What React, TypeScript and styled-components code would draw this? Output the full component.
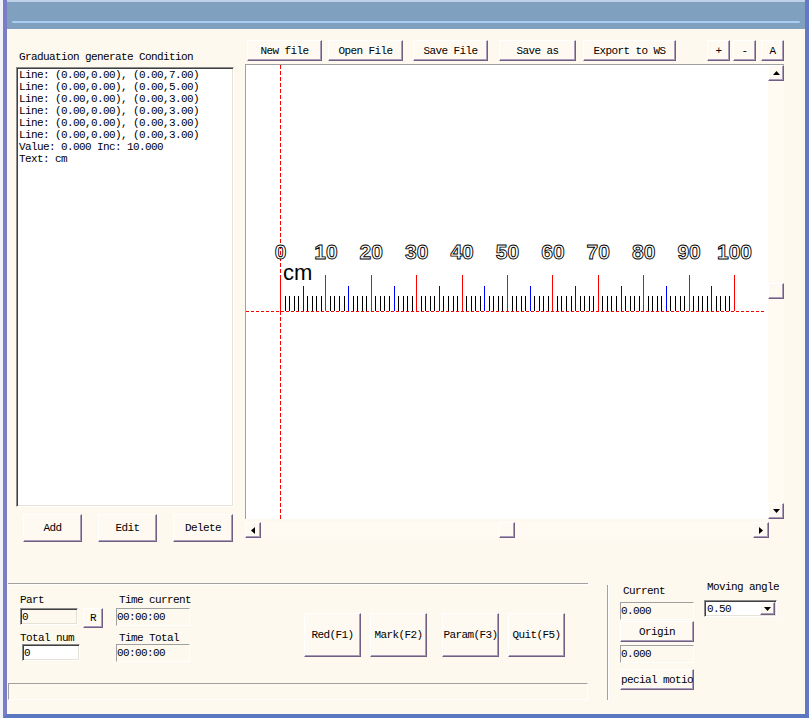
import styled, { createGlobalStyle, css } from "styled-components";

const GlobalStyle = createGlobalStyle`
  html, body { margin: 0; padding: 0; }
  body { background: #f2f3f9; }
  #root { width: 809px; height: 718px; overflow: hidden; }
`;

const sysFont = css`
  font-family: "Liberation Mono", "DejaVu Sans Mono", monospace;
  font-size: 11px;
  letter-spacing: -0.6px;
  line-height: 12px;
  color: #000;
`;

const raised = css`
  box-sizing: border-box;
  background: #fefaf1;
  border: 1px solid;
  border-color: #ffffff #6f5f82 #6f5f82 #ffffff;
  box-shadow: inset -1px -1px 0 #a99dba;
`;

const sunken = css`
  box-sizing: border-box;
  border: 1px solid;
  border-color: #8c8c8c #ffffff #ffffff #8c8c8c;
  box-shadow: inset 1px 1px 0 #404040, inset -1px -1px 0 #e6e2d8;
`;

const TOOLBAR = [
  { label: "New file", w: 75, ml: 2 },
  { label: "Open File", w: 75, ml: 6 },
  { label: "Save File", w: 75, ml: 10 },
  { label: "Save as", w: 77, ml: 11 },
  { label: "Export to WS", w: 93, ml: 7 },
  { label: "+", w: 23, ml: 31 },
  { label: "-", w: 23, ml: 3 },
  { label: "A", w: 23, ml: 5 },
];

const LINES = [
  "Line: (0.00,0.00), (0.00,7.00)",
  "Line: (0.00,0.00), (0.00,5.00)",
  "Line: (0.00,0.00), (0.00,3.00)",
  "Line: (0.00,0.00), (0.00,3.00)",
  "Line: (0.00,0.00), (0.00,3.00)",
  "Line: (0.00,0.00), (0.00,3.00)",
  "Value: 0.000 Inc: 10.000",
  "Text: cm",
];

const FKEYS = [
  { label: "Red(F1)", ml: 0 },
  { label: "Mark(F2)", ml: 9 },
  { label: "Param(F3)", ml: 15 },
  { label: "Quit(F5)", ml: 9 },
];

// ruler geometry, in canvas coordinates
const X0 = 34;
const UNIT = 4.54;
const BASE = 246;

const Frame = styled.div`
  margin-left: 3px;
  width: 798px;
  height: 714px;
  border-left: 4px solid #7b7dc6;
  border-right: 4px solid #6478c4;
  border-bottom: 4px solid #5b77bf;
  display: flex;
  flex-direction: column;
  background: #fef9ef;
`;

const TitleBar = styled.div`
  flex: none;
  box-sizing: border-box;
  height: 29px;
  padding: 19px 5px 0;
  background: #7fa1bf;
  border-top: 2px solid #bdd0e8;
`;

const TitleGlint = styled.div`
  height: 2px;
  border-radius: 1px;
  background: #a8cdef;
`;

const Client = styled.div`
  flex: 1;
  display: flex;
  flex-direction: column;
`;

const TopSection = styled.div`
  display: flex;
  align-items: flex-start;
  height: 513px;
  flex: none;
`;

const LeftPanel = styled.div`
  margin-left: 9px;
  width: 218px;
  display: flex;
  flex-direction: column;
`;

const Label = styled.div<{ $mt?: number; $pl?: number }>`
  ${sysFont};
  margin-top: ${({ $mt }) => $mt ?? 0}px;
  padding-left: ${({ $pl }) => $pl ?? 3}px;
  white-space: pre;
`;

const ListBox = styled.div`
  ${sysFont};
  ${sunken};
  margin-top: 4px;
  height: 440px;
  padding: 1px 0 0 2px;
  background: #ffffff;
  white-space: pre;
`;

const ButtonRow = styled.div`
  display: flex;
  gap: 16px;
  margin-top: 7px;
  padding-left: 7px;
`;

const Button = styled.div<{ $w: number; $h: number; $ml?: number; $mt?: number }>`
  ${raised};
  ${sysFont};
  width: ${({ $w }) => $w}px;
  height: ${({ $h }) => $h}px;
  margin-left: ${({ $ml }) => $ml ?? 0}px;
  margin-top: ${({ $mt }) => $mt ?? 0}px;
  flex: none;
  display: flex;
  align-items: center;
  justify-content: center;
  overflow: hidden;
  white-space: nowrap;
`;

const RightPanel = styled.div`
  margin-left: 11px;
  width: 539px;
  display: flex;
  flex-direction: column;
`;

const Toolbar = styled.div`
  display: flex;
  margin-top: 11px;
`;

const CanvasBox = styled.div`
  display: flex;
  margin-top: 3px;
  border-top: 1px solid #a0a0a0;
  border-left: 1px solid #a0a0a0;
  height: 454px;
`;

const Canvas = styled.div`
  width: 522px;
  height: 454px;
  background: #ffffff;
  svg { display: block; }
`;

const VScroll = styled.div`
  width: 16px;
  display: flex;
  flex-direction: column;
  background: #fffbf2;
`;

const HScroll = styled.div`
  display: flex;
  margin-top: 3px;
  width: 524px;
  height: 17px;
  background: #fffbf2;
`;

const ScrollBtn = styled.div<{ $ml?: number; $mt?: number }>`
  ${raised};
  width: 16px;
  height: 16px;
  flex: none;
  margin-left: ${({ $ml }) => ($ml === undefined ? "0" : $ml < 0 ? "auto" : `${$ml}px`)};
  margin-top: ${({ $mt }) => ($mt === undefined ? "0" : $mt < 0 ? "auto" : `${$mt}px`)};
  display: flex;
  align-items: center;
  justify-content: center;
`;

const BottomSection = styled.div`
  display: flex;
  align-items: flex-start;
  margin-top: 39px;
  padding-left: 1px;
`;

const LeftGroup = styled.div`
  margin-top: 2px;
  width: 580px;
  display: flex;
  flex-direction: column;
`;

const Groove = styled.div`
  border-top: 1px solid #a0a0a0;
  border-bottom: 1px solid #ffffff;
`;

const FieldArea = styled.div`
  height: 98px;
  display: flex;
  align-items: flex-start;
`;

const Column = styled.div<{ $w: number; $pl?: number }>`
  box-sizing: border-box;
  width: ${({ $w }) => $w}px;
  padding-left: ${({ $pl }) => $pl ?? 0}px;
  display: flex;
  flex-direction: column;
  align-items: flex-start;
  flex: none;
`;

const FieldRow = styled.div`
  display: flex;
  align-items: flex-start;
  margin-top: 2px;
`;

const Input = styled.div<{ $w: number; $white?: boolean; $ml?: number; $mt?: number }>`
  ${sunken};
  ${sysFont};
  width: ${({ $w }) => $w}px;
  height: 17px;
  margin-left: ${({ $ml }) => $ml ?? 0}px;
  margin-top: ${({ $mt }) => $mt ?? 0}px;
  padding-left: 1px;
  background: ${({ $white }) => ($white ? "#ffffff" : "#fef9ef")};
  display: flex;
  align-items: center;
`;

const Static = styled.div<{ $mt?: number }>`
  ${sysFont};
  box-sizing: border-box;
  width: 74px;
  height: 18px;
  margin-top: ${({ $mt }) => $mt ?? 0}px;
  border: 1px solid;
  border-color: #a0a0a0 #ffffff #ffffff #a0a0a0;
  display: flex;
  align-items: center;
`;

const FnRow = styled.div`
  display: flex;
  margin-left: 114px;
  margin-top: 28px;
`;

const StatusBox = styled.div`
  box-sizing: border-box;
  height: 17px;
  border: 1px solid;
  border-color: #a0a0a0 #ffffff #ffffff #a0a0a0;
`;

const RightGroup = styled.div`
  margin-left: 19px;
  display: flex;
  align-items: flex-start;
`;

const VLine = styled.div`
  margin-top: 4px;
  width: 1px;
  height: 115px;
  background: #a0a0a0;
  border-right: 1px solid #ffffff;
`;

const Select = styled.div`
  ${sunken};
  ${sysFont};
  margin-top: 7px;
  width: 73px;
  height: 17px;
  padding: 0 1px 0 2px;
  background: #ffffff;
  display: flex;
  align-items: center;
`;

const DropBtn = styled.div`
  ${raised};
  margin-left: auto;
  width: 15px;
  height: 13px;
  display: flex;
  align-items: center;
  justify-content: center;
`;

const Arrow = ({ dir }: { dir: "up" | "down" | "left" | "right" }) => {
  const vertical = dir === "up" || dir === "down";
  const pts = {
    up: "0,4 7,4 3.5,0",
    down: "0,0 7,0 3.5,4",
    left: "4,0 4,7 0,3.5",
    right: "0,0 0,7 4,3.5",
  }[dir];
  return (
    <svg width={vertical ? 7 : 4} height={vertical ? 4 : 7} viewBox={vertical ? "0 0 7 4" : "0 0 4 7"}>
      <polygon points={pts} fill="#000" />
    </svg>
  );
};

const RulerDrawing = () => {
  const ticks = [];
  for (let i = 0; i <= 100; i++) {
    const x = Math.round(X0 + i * UNIT) + 0.5;
    const major = i % 10 === 0;
    const mid = !major && i % 5 === 0;
    const top = major ? 210 : mid ? 221 : 231;
    const color = major ? "#ff0000" : mid ? "#0000ff" : "#000000";
    ticks.push(<line key={i} x1={x} x2={x} y1={top} y2={BASE} stroke={color} strokeWidth={1} />);
  }
  const labels = [];
  for (let n = 0; n <= 10; n++) {
    labels.push(
      <text
        key={n}
        x={X0 + n * 10 * UNIT + 0.5}
        y={194}
        textAnchor="middle"
        fontFamily="'Liberation Sans', Arial, sans-serif"
        fontWeight="bold"
        fontSize={21}
        fill="#ffffff"
        stroke="#000000"
        strokeWidth={0.9}
      >
        {n * 10}
      </text>
    );
  }
  return (
    <svg width={522} height={454} viewBox="0 0 522 454">
      <line x1={X0 + 0.5} x2={X0 + 0.5} y1={0} y2={454} stroke="#ff0000" strokeDasharray="4 2" />
      <line x1={0} x2={519} y1={BASE + 0.5} y2={BASE + 0.5} stroke="#ff0000" strokeDasharray="3 2" />
      {ticks}
      {labels}
      <text x={37} y={215} fontFamily="'Liberation Sans', Arial, sans-serif" fontSize={22} fill="#000000">
        cm
      </text>
    </svg>
  );
};

export default function App() {
  return (
    <>
      <GlobalStyle />
      <Frame>
        <TitleBar>
          <TitleGlint />
        </TitleBar>
        <Client>
          <TopSection>
            <LeftPanel>
              <Label $mt={22}>Graduation generate Condition</Label>
              <ListBox>
                {LINES.map((l, i) => (
                  <div key={i}>{l}</div>
                ))}
              </ListBox>
              <ButtonRow>
                <Button $w={59} $h={28}>Add</Button>
                <Button $w={59} $h={28}>Edit</Button>
                <Button $w={60} $h={28}>Delete</Button>
              </ButtonRow>
            </LeftPanel>
            <RightPanel>
              <Toolbar>
                {TOOLBAR.map((b) => (
                  <Button key={b.label} $w={b.w} $h={21} $ml={b.ml}>
                    {b.label}
                  </Button>
                ))}
              </Toolbar>
              <CanvasBox>
                <Canvas>
                  <RulerDrawing />
                </Canvas>
                <VScroll>
                  <ScrollBtn>
                    <Arrow dir="up" />
                  </ScrollBtn>
                  <ScrollBtn $mt={202} />
                  <ScrollBtn $mt={-1}>
                    <Arrow dir="down" />
                  </ScrollBtn>
                </VScroll>
              </CanvasBox>
              <HScroll>
                <ScrollBtn>
                  <Arrow dir="left" />
                </ScrollBtn>
                <ScrollBtn $ml={238} />
                <ScrollBtn $ml={-1}>
                  <Arrow dir="right" />
                </ScrollBtn>
              </HScroll>
            </RightPanel>
          </TopSection>

          <BottomSection>
            <LeftGroup>
              <Groove />
              <FieldArea>
                <Column $w={108} $pl={12}>
                  <Label $mt={9} $pl={0}>Part</Label>
                  <FieldRow>
                    <Input $w={58}>0</Input>
                    <Button $w={20} $h={20} $ml={5}>R</Button>
                  </FieldRow>
                  <Label $mt={4} $pl={0}>Total num</Label>
                  <Input $w={58} $white $ml={2}>0</Input>
                </Column>
                <Column $w={74}>
                  <Label $mt={9}>Time current</Label>
                  <Static $mt={2}>00:00:00</Static>
                  <Label $mt={6}>Time Total</Label>
                  <Static>00:00:00</Static>
                </Column>
                <FnRow>
                  {FKEYS.map((f) => (
                    <Button key={f.label} $w={57} $h={44} $ml={f.ml}>
                      {f.label}
                    </Button>
                  ))}
                </FnRow>
              </FieldArea>
              <StatusBox />
            </LeftGroup>

            <RightGroup>
              <VLine />
              <Column $w={85} $pl={11}>
                <Label $mt={4}>Current</Label>
                <Static $mt={5}>0.000</Static>
                <Button $w={74} $h={21} $mt={1}>Origin</Button>
                <Static $mt={3}>0.000</Static>
                <Button $w={74} $h={21} $mt={6}>pecial motio</Button>
              </Column>
              <Column $w={90} $pl={10}>
                <Label>Moving angle</Label>
                <Select>
                  0.50
                  <DropBtn>
                    <Arrow dir="down" />
                  </DropBtn>
                </Select>
              </Column>
            </RightGroup>
          </BottomSection>
        </Client>
      </Frame>
    </>
  );
}
